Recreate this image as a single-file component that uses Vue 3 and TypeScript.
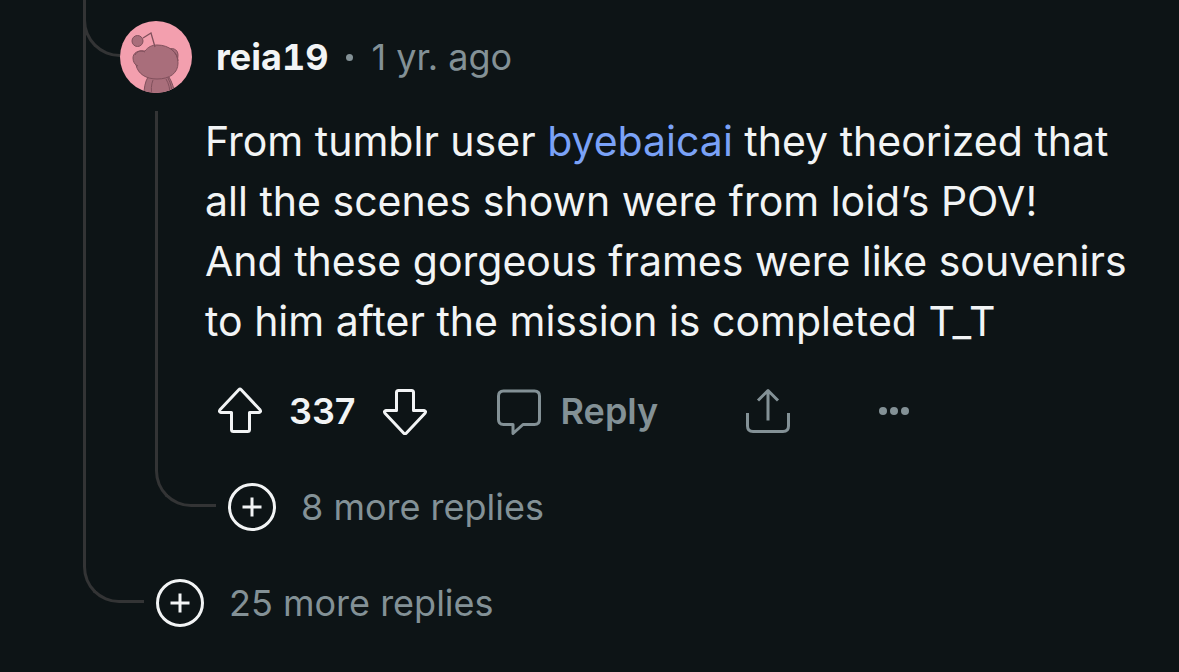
<script setup lang="ts">
import { ref } from 'vue'

const author = 'reia19'
const age = '1 yr. ago'
const score = ref<number>(337)
const nestedReplies = 8
const threadReplies = 25
</script>

<template>
  <main class="thread">
    <span class="branch" aria-hidden="true"></span>
    <span class="rail thread-rail" aria-hidden="true"></span>

    <article class="comment">
      <header class="head">
        <svg class="avatar" viewBox="0 0 72 72" role="img" aria-label="Avatar">
          <defs>
            <clipPath id="avatar-disc"><circle cx="36" cy="36" r="36" /></clipPath>
          </defs>
          <g clip-path="url(#avatar-disc)">
            <rect width="72" height="72" fill="#f39fae" />
            <g fill="#a96e7b" stroke="#80505c" stroke-width="1">
              <path d="M28 56C25 61 24 67 24 74H55C54 67 52 61 49 56Z" />
              <path d="M33 59C31 64 31 69 32 74M46 58C49 63 50 68 50 74M48 57C51 63 52 68 52 74" fill="none" />
              <path d="M47 29C52 26 58 28 58 34C58 38 57 39 55 41Z" />
              <path d="M24 30C18 29 13 32 13 37C13 41 15 43 16 44C18 53 26 58 37 58C50 58 58 52 58 42C58 31 49 24 37 24C32 24 28 26 25 30Z" />
              <path d="M15 34C17 30 21 29 25 31M16 44L18 45M51 28C55 31 58 35 58 40" fill="none" />
              <circle cx="17.500" cy="20" r="5.500" />
              <path d="M23 17L31 12L35 26" fill="none" stroke-width="1.300" />
            </g>
          </g>
        </svg>
        <a class="author" href="#author">{{ author }}</a>
        <span class="dot" aria-hidden="true"></span>
        <time class="age">{{ age }}</time>
      </header>

      <span class="rail comment-rail" aria-hidden="true"></span>

      <p class="body">
        From tumblr user <a href="#byebaicai">byebaicai</a> they theorized that all the scenes shown were from loid’s POV!<br />
        And these gorgeous frames were like souvenirs to him after the mission is completed T_T
      </p>

      <div class="actions">
        <div class="votes">
          <button type="button" aria-label="Upvote" @click="score++">
            <svg class="icon" viewBox="0 0 48 48">
              <path class="bright" d="M22.800 2.700Q24 1.500 25.200 2.700L44 22.700Q45.500 25 43 25.500H33.500V42.500Q33.500 44.500 31.500 44.500H17.500Q15.500 44.500 15.500 42.500V25.500H5Q2.500 25 4 22.700Z" />
            </svg>
          </button>
          <span class="score">{{ score }}</span>
          <button type="button" aria-label="Downvote" @click="score--">
            <svg class="icon" viewBox="0 0 48 48">
              <path class="bright" d="M25.200 46.300Q24 47.500 22.800 46.300L4 26.300Q2.500 24 5 23.500H15.500V5.500Q15.500 3.500 17.500 3.500H30.500Q32.500 3.500 32.500 5.500V23.500H43Q45.500 24 44 26.300Z" />
            </svg>
          </button>
        </div>
        <button class="reply" type="button">
          <svg class="icon" viewBox="0 0 48 48" aria-hidden="true">
            <path d="M8.500 4H39.500Q44.500 4 44.500 9V32.500Q44.500 37.500 39.500 37.500H28L18 46.500V37.500H8.500Q3.500 37.500 3.500 32.500V9Q3.500 4 8.500 4Z" />
          </svg>
          <span>Reply</span>
        </button>
        <button class="share" type="button" aria-label="Share">
          <svg class="icon" viewBox="0 0 48 48">
            <path d="M24 33.500V4M14 13.500L24 3.500L34 13.500M3.500 26V39Q3.500 44.500 9 44.500H39Q44.500 44.500 44.500 39V26" />
          </svg>
        </button>
        <button type="button" aria-label="More options">
          <svg class="icon dots" viewBox="0 0 48 48">
            <circle cx="13" cy="24" r="4" />
            <circle cx="24" cy="24" r="4" />
            <circle cx="35" cy="24" r="4" />
          </svg>
        </button>
      </div>

      <button class="more nested-more" type="button">
        <svg class="icon" viewBox="0 0 48 48" aria-hidden="true">
          <circle class="bright" cx="24" cy="24" r="22.500" />
          <path class="bright" d="M24 14.500V33.500M14.500 24H33.500" />
        </svg>
        <span>{{ nestedReplies }} more replies</span>
      </button>
    </article>

    <button class="more thread-more" type="button">
      <svg class="icon" viewBox="0 0 48 48" aria-hidden="true">
        <circle class="bright" cx="24" cy="24" r="22.500" />
        <path class="bright" d="M24 14.500V33.500M14.500 24H33.500" />
      </svg>
      <span>{{ threadReplies }} more replies</span>
    </button>
  </main>
</template>

<style>
body {
  margin: 0;
  background: #0d1416;
}
</style>

<style scoped>
.thread {
  display: grid;
  grid-template-columns: 37px 36px 1fr;
  row-gap: 48px;
  padding: 0 40px 44px 83px;
  background: #0d1416;
  color: #f2f4f5;
  font-family: Inter, "Liberation Sans", sans-serif;
  font-size: 36px;
}
.branch {
  grid-area: 1 / 1 / 2 / 2;
  box-sizing: border-box;
  height: 57px;
  border: solid #333435;
  border-width: 0 0 3px 3px;
  border-bottom-left-radius: 37px;
}
.rail {
  margin: 0 12px 24px 0;
  border: solid #333435;
  border-width: 0 0 3px 3px;
  border-bottom-left-radius: 36px;
}
.thread-rail {
  grid-area: 1 / 1 / 3 / 3;
}
.comment {
  grid-area: 1 / 2 / 2 / 4;
  display: grid;
  grid-template-columns: 35px 50px 23px 1fr;
  padding-top: 21px;
}
.head {
  grid-area: 1 / 1 / 2 / 5;
  display: flex;
  align-items: center;
  margin-bottom: 18px;
}
.avatar {
  width: 72px;
  height: 72px;
  margin-right: 24px;
}
.author {
  color: inherit;
  font-weight: 700;
  font-variant-numeric: tabular-nums;
  text-decoration: none;
}
.dot {
  width: 7px;
  height: 7px;
  margin: 0 18px;
  border-radius: 50%;
  background: #839196;
}
.age {
  color: #839196;
}
.comment-rail {
  grid-area: 2 / 2 / 5 / 4;
}
.body {
  grid-area: 2 / 3 / 3 / 5;
  margin: 0;
  font-size: 41px;
  line-height: 60px;
}
.body a {
  color: #7aa2f7;
  text-decoration: none;
}
.actions {
  grid-area: 3 / 3 / 4 / 5;
  display: flex;
  align-items: center;
  margin: 36px 0 48px;
  padding-left: 11px;
}
button {
  display: flex;
  align-items: center;
  padding: 0;
  border: 0;
  background: none;
  color: #839196;
  font: inherit;
  cursor: pointer;
}
.icon {
  width: 48px;
  height: 48px;
  fill: none;
  stroke: #839196;
  stroke-width: 3;
  stroke-linejoin: round;
}
.icon .bright {
  stroke: #f2f4f5;
}
.icon.dots {
  fill: #839196;
  stroke: none;
}
.votes {
  display: flex;
  align-items: center;
  gap: 25px;
  margin-right: 66px;
}
.score {
  font-weight: 600;
}
.reply {
  gap: 18px;
  margin-right: 86px;
  font-weight: 600;
}
.share {
  margin-right: 78px;
}
.more {
  gap: 25px;
  justify-self: start;
}
.nested-more {
  grid-area: 4 / 4 / 5 / 5;
}
.thread-more {
  grid-area: 2 / 3 / 3 / 4;
}
</style>
